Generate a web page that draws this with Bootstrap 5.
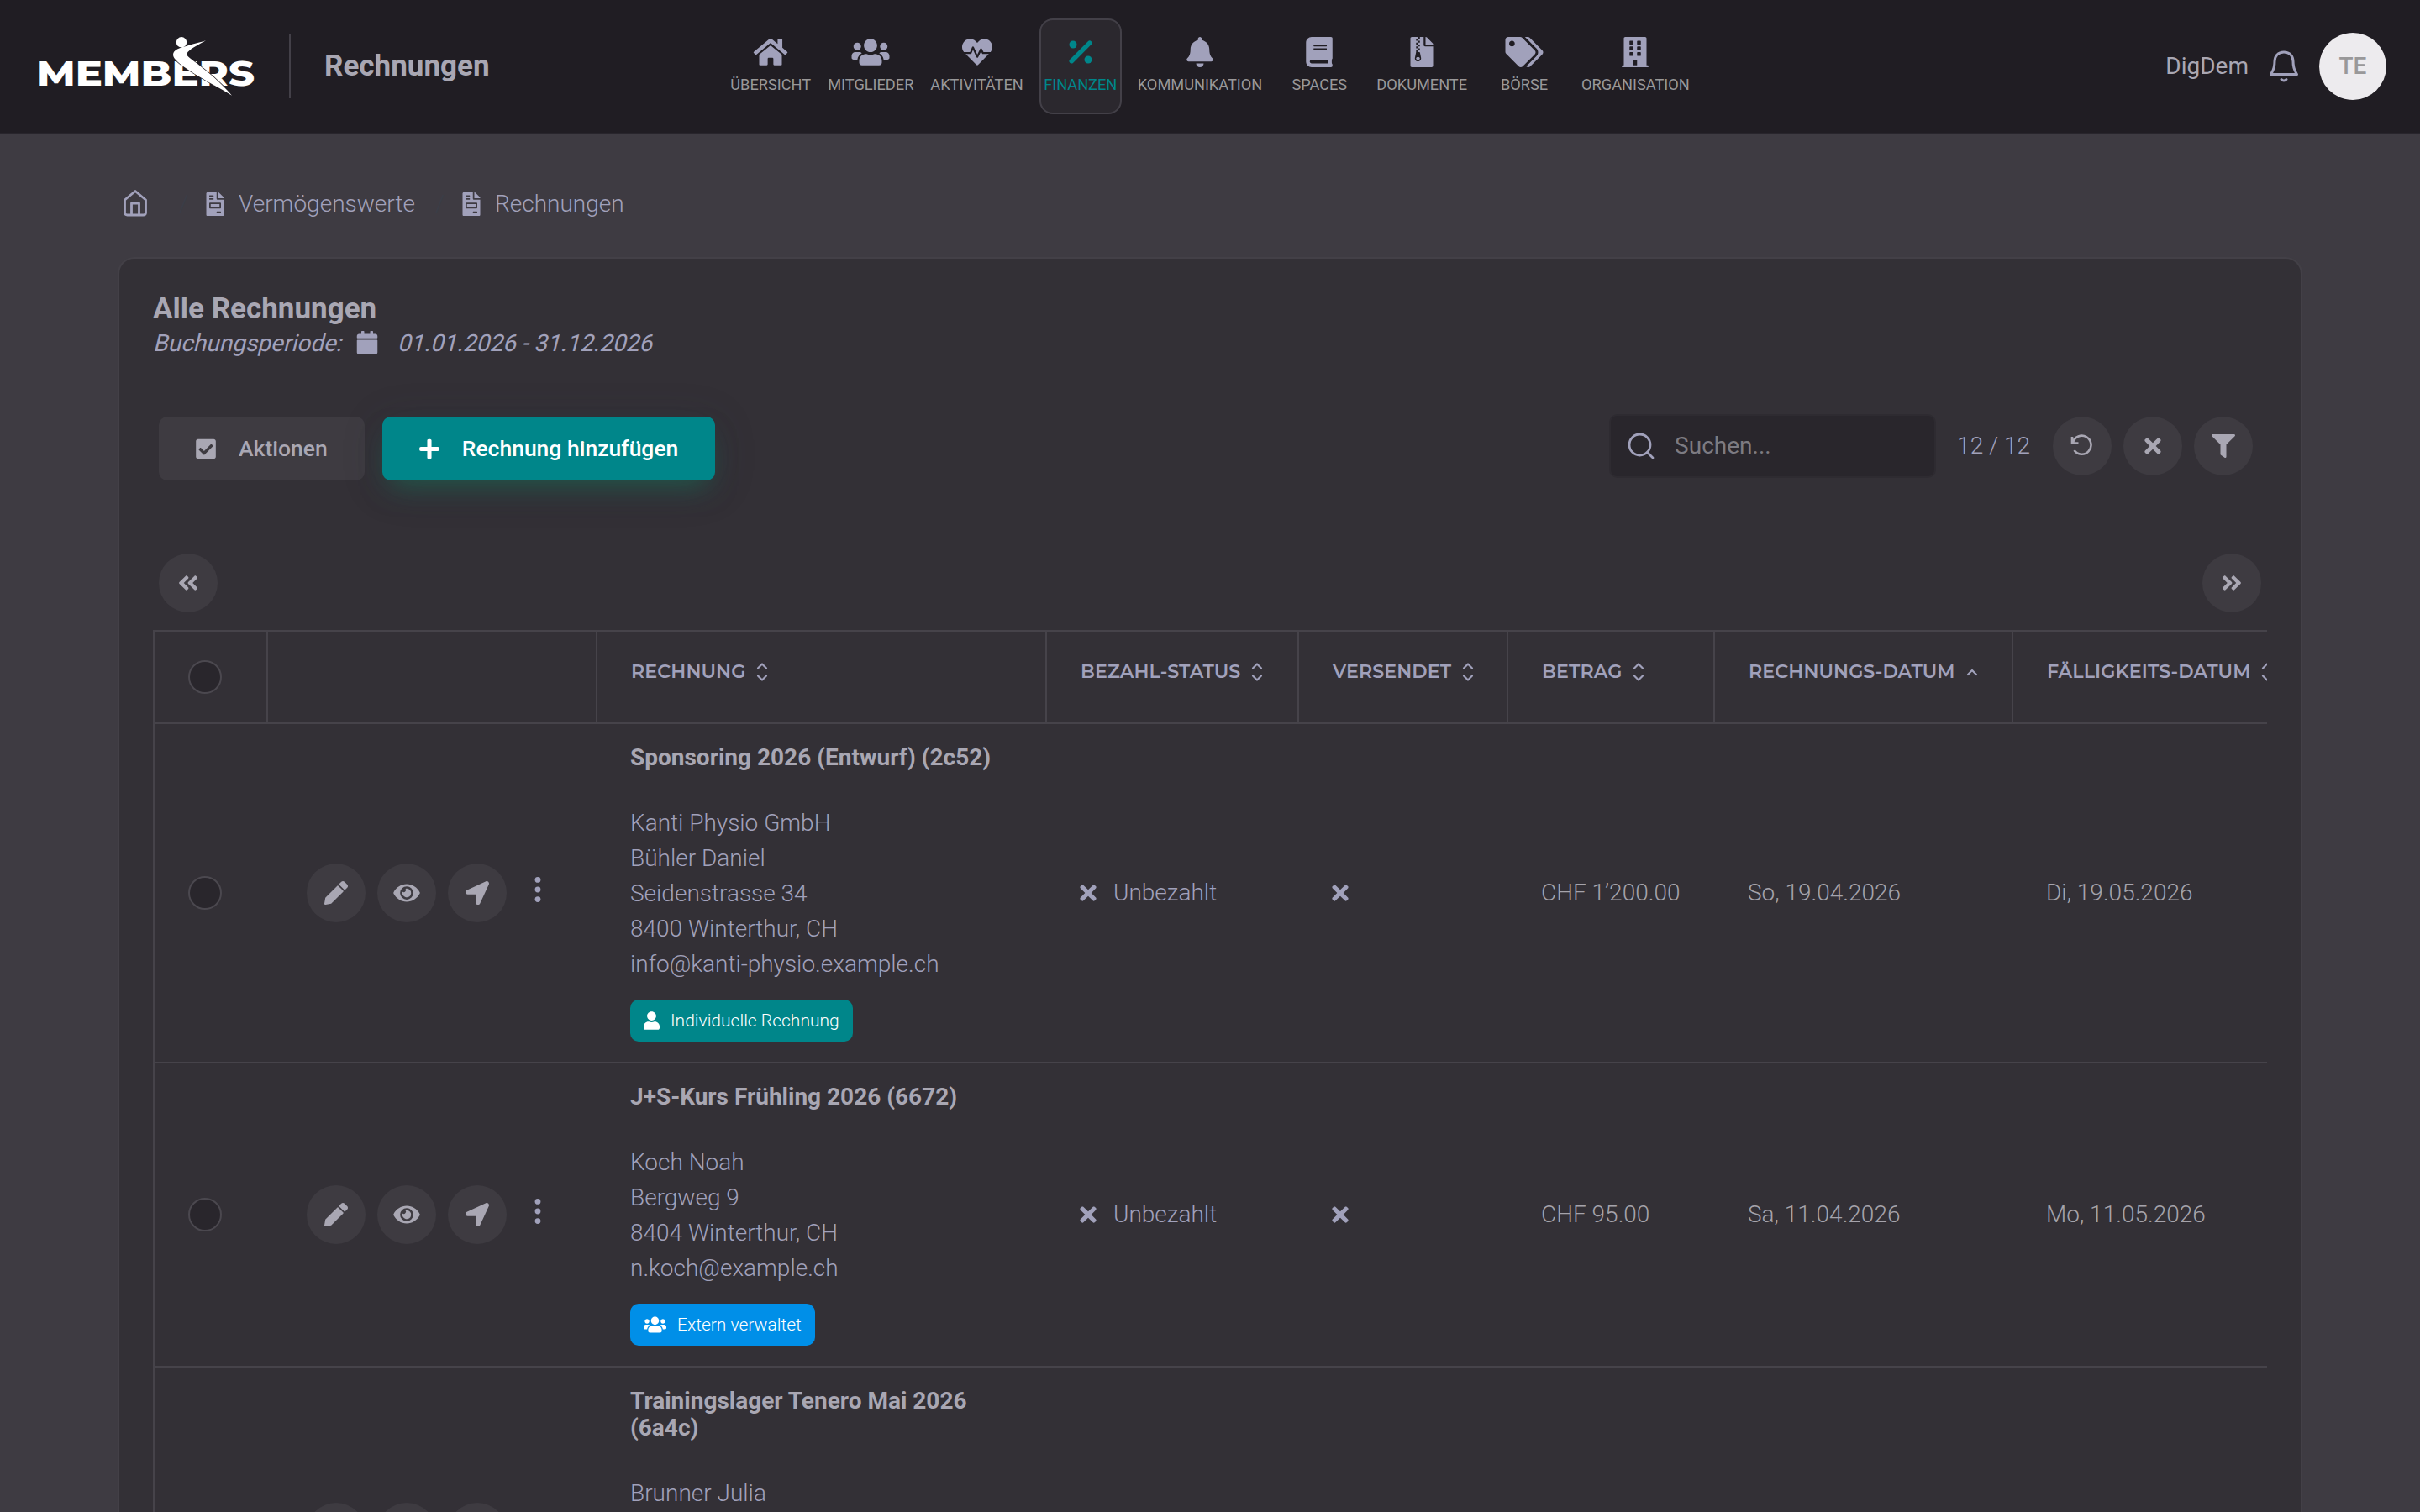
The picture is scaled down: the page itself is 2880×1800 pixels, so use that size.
<!DOCTYPE html>
<html lang="de">
<head>
    <meta charset="UTF-8">
    <title>Rechnungen</title>
    <link href="https://cdn.jsdelivr.net/npm/bootstrap@5.3.0/dist/css/bootstrap.min.css" rel="stylesheet">
    <style>
        body {
            height: 1800px;
            overflow: hidden;
            background: #3e3b42;
            color: #a1a1bb;
            font-family: Roboto, "Liberation Sans", sans-serif;
            font-size: 28px;
            font-weight: 300;
            line-height: 42px;
        }
        .ic { width: 28px; height: 28px; fill: currentColor; flex: none; display: block; }

        /* Kopfzeile */
        .topbar {
            display: grid;
            grid-template-columns: 1fr auto 1fr;
            height: 160px;
            padding: 0 40px;
            background: #201d23;
            border-bottom: 2px solid #28252c;
        }
        .logo { width: 258px; height: 76px; margin-left: 6px; display: block; flex: none; overflow: visible; }
        .page-name {
            height: 76px;
            margin-left: 40px;
            padding-left: 40px;
            border-left: 2px solid #434048;
            color: #a9a7b3;
            font-size: 35px;
            font-weight: 700;
            line-height: 75px;
        }
        .main-nav { gap: 18px; }
        .main-nav a {
            min-width: 98px;
            height: 114px;
            padding: 22px 1px 0;
            border-radius: 16px;
            color: #999899;
            font-size: 18.2px;
            font-weight: 400;
            line-height: 27px;
            text-decoration: none;
        }
        .main-nav a.active { background: #2b282e; border: 2px solid #434048; color: #00868a; padding-top: 20px; }
        .main-nav .ic { width: 46px; height: 36px; margin: 0 auto 7px; color: #a1a1bb; }
        .main-nav .active .ic { color: #00868a; }
        .club { color: #a9a7b3; font-weight: 400; }
        .notify { margin: 0 23px; }
        .avatar { width: 80px; height: 80px; background: #edebee; color: #999899; font-weight: 500; }

        /* Breadcrumb */
        .crumbs { height: 146px; padding: 62px 0 0 146px; }
        .crumbs .home-ic { margin-right: 13px; }
        .crumbs .sep { width: 53px; padding-left: 24px; color: #3a3e48; }
        .crumbs .crumb { height: 42px; gap: 14px; }

        /* Karte */
        .panel {
            width: 2600px;
            margin: 0 auto;
            padding: 39px 40px 0;
            background: #333036;
            border: 2px solid #434047;
            border-bottom: 0;
            border-radius: 20px 20px 0 0;
            height: 1494px;
            overflow: hidden;
        }
        .panel-title { margin: 0; color: #a9a7b3; font-size: 35px; font-weight: 700; line-height: 41px; }
        .period { font-weight: 400; line-height: 42px; }
        .period span { transform: skewX(-14deg); transform-origin: 0 72%; }
        .period .ic { margin: 6px 22px 0 17px; }
        .tools { margin-top: 63px; padding: 0 17px 0 7px; }
        .left-tools { gap: 21px; margin-top: 3px; margin-bottom: -3px; }
        .tool-btn {
            height: 76px;
            padding: 0 44px;
            border: 0;
            border-radius: 10px;
            background: #3e3b41;
            color: #a9a7b3;
            font-size: 26.5px;
            font-weight: 500;
            gap: 27px;
        }
        .tool-btn .ic { width: 24px; height: 27px; }
        .tool-btn.add { background: #00868a; color: #fff; box-shadow: 0 16px 32px -10px rgba(20, 120, 90, .55), 0 8px 50px rgba(40, 60, 80, .2); }
        .search { width: 389px; height: 76px; padding-left: 20px; background: #29262c; border: 2px solid #2e2b31; border-radius: 10px; color: #7d7b82; font-weight: 400; }
        .hits { margin: 0 27px 0 25px; }
        .round-list { gap: 14px; }
        .round-btn { width: 70px; height: 70px; border-radius: 50%; background: #3e3b41; color: #a9a7b3; flex: none; }

        /* Tabelle */
        .pager { margin-top: 90px; padding: 0 7px; height: 70px; }
        .table-clip { width: 2516px; margin-top: 21px; overflow: hidden; }
        .inv-table {
            width: 2563px;
            table-layout: fixed;
            border-collapse: separate;
            border-spacing: 0;
            border-left: 2px solid #46434a;
            margin: 0;
        }
        .inv-table th, .inv-table td { padding: 0 0 0 39px; border: 0 solid #46434a; border-bottom-width: 2px; vertical-align: middle; }
        .inv-table th {
            height: 112px;
            padding-left: 40px;
            border-width: 2px 2px 2px 0;
            font-family: Montserrat, Inter, sans-serif;
            font-size: 22.2px;
            font-weight: 600;
            letter-spacing: .1px;
            white-space: nowrap;
            color: #a1a1bb;
        }
        .inv-table th > div { margin-bottom: 13px; gap: 13px; }
        .inv-table th.pick > div { margin: 0; }
        .inv-table th .ic { width: 14px; height: 24px; fill: none; stroke: currentColor; stroke-width: 2.2; stroke-linejoin: round; stroke-linecap: round; }
        .inv-table td:first-child { padding-left: 40px; }
        .inv-table .bill { padding: 24px 40px 24px 39px; }
        .tick { width: 40px; height: 40px; border: 2px solid #4b484f; border-radius: 50%; background: #29262c; }
        .acts { gap: 14px; padding-left: 7px; }
        .acts .eye-ic { width: 32px; }
        .acts .dots-ic { height: 32px; margin: 0 0 8px 9px; color: #a1a1bb; }
        .bill-name { margin: 0 0 40.5px; color: #a9a7b3; font-size: 28px; font-weight: 700; line-height: 32.4px; }
        .tag { height: 50px; margin-top: 21px; padding: 0 16px; border-radius: 10px; gap: 13px; color: #fff; font-size: 21px; background: #00868a; }
        .tag.extern { background: #008fe8; }
        .tag .ic { width: 19px; height: 22px; }
        .tag.extern .ic { width: 27px; }
        .grey { color: #a5a3ab; }
        .x-ic { width: 20px; height: 28px; }
        .paid { gap: 20px; }
    </style>
</head>
<body>
    <svg width="0" height="0" class="d-none">
        <symbol id="home" viewBox="0 0 576 512"><path d="M280.37 148.26L96 300.11V464a16 16 0 0 0 16 16l112.06-.29a16 16 0 0 0 15.92-16V368a16 16 0 0 1 16-16h64a16 16 0 0 1 16 16v95.64a16 16 0 0 0 16 16.05L464 480a16 16 0 0 0 16-16V300L295.67 148.26a12.19 12.19 0 0 0-15.3 0zM571.6 251.47L488 182.56V44.05a12 12 0 0 0-12-12h-56a12 12 0 0 0-12 12v72.61L318.47 43a48 48 0 0 0-61 0L4.34 251.47a12 12 0 0 0-1.6 16.9l25.5 31A12 12 0 0 0 45.15 301l235.22-193.74a12.19 12.19 0 0 1 15.3 0L530.9 301a12 12 0 0 0 16.9-1.6l25.5-31a12 12 0 0 0-1.7-16.93z"/></symbol>
        <symbol id="users" viewBox="0 0 640 512"><path d="M96 224c35.3 0 64-28.7 64-64s-28.7-64-64-64-64 28.7-64 64 28.7 64 64 64zm448 0c35.3 0 64-28.7 64-64s-28.7-64-64-64-64 28.7-64 64 28.7 64 64 64zm32 32h-64c-17.6 0-33.5 7.1-45.1 18.6 40.3 22.1 68.9 62 75.1 109.4h66c17.7 0 32-14.3 32-32v-32c0-35.3-28.7-64-64-64zm-256 0c61.9 0 112-50.1 112-112S381.9 32 320 32 208 82.1 208 144s50.1 112 112 112zm76.8 32h-8.3c-20.8 10-43.9 16-68.5 16s-47.6-6-68.5-16h-8.3C179.6 288 128 339.6 128 403.2V432c0 26.5 21.5 48 48 48h288c26.5 0 48-21.5 48-48v-28.8c0-63.6-51.6-115.2-115.2-115.2zm-223.7-13.4C161.5 263.1 145.6 256 128 256H64c-35.3 0-64 28.7-64 64v32c0 17.7 14.3 32 32 32h65.9c6.3-47.4 34.9-87.3 75.2-109.4z"/></symbol>
        <symbol id="heart" viewBox="0 0 512 512"><path d="M320.2 243.8l-49.7 99.4c-6 12.1-23.4 11.7-28.9-.6l-56.9-126.3-30 71.7H60.6l182.5 186.5c7.1 7.3 18.6 7.3 25.7 0L451.4 288H342.3l-22.1-44.2zM473.7 73.9l-2.4-2.5c-51.5-52.6-135.8-52.6-187.4 0L256 100l-27.9-28.5c-51.5-52.7-135.9-52.7-187.4 0l-2.4 2.4C-10.4 123.7-12.5 203 31 256h102.4l35.9-86.2c5.4-12.9 23.6-13.1 29.4-.4l58.2 129.3 49-97.9c5.9-11.8 22.7-11.8 28.6 0l27.6 55.2H481c43.5-53 41.4-132.3-7.3-182.1z"/></symbol>
        <symbol id="percent" viewBox="0 0 384 512"><circle cx="64" cy="128" r="64"/><circle cx="320" cy="384" r="64"/><path d="M352 96L46 402" transform="translate(-7 6)" fill="none" stroke="currentColor" stroke-width="78" stroke-linecap="round"/></symbol>
        <symbol id="bell" viewBox="0 0 448 512"><path d="M224 512c35.32 0 63.97-28.65 63.97-64H160.03c0 35.35 28.65 64 63.97 64zm215.39-149.71c-19.32-20.76-55.47-51.99-55.47-154.29 0-77.7-54.48-139.9-127.94-155.16V32c0-17.67-14.32-32-31.98-32s-31.98 14.33-31.98 32v20.84C118.56 68.1 64.08 130.3 64.08 208c0 102.3-36.15 133.53-55.47 154.29-6 6.45-8.66 14.16-8.61 21.71.11 16.4 12.98 32 32.1 32h383.8c19.12 0 32-15.6 32.1-32 .05-7.55-2.61-15.27-8.61-21.71z"/></symbol>
        <symbol id="book" viewBox="0 0 448 512"><path d="M448 360V24c0-13.3-10.7-24-24-24H96C43 0 0 43 0 96v320c0 53 43 96 96 96h328c13.3 0 24-10.7 24-24v-16c0-7.5-3.5-14.3-8.9-18.7-4.2-15.4-4.2-59.3 0-74.7 5.4-4.3 8.9-11.1 8.9-18.6zM128 134c0-3.3 2.7-6 6-6h212c3.3 0 6 2.7 6 6v20c0 3.3-2.7 6-6 6H134c-3.3 0-6-2.7-6-6v-20zm0 64c0-3.3 2.7-6 6-6h212c3.3 0 6 2.7 6 6v20c0 3.3-2.7 6-6 6H134c-3.3 0-6-2.7-6-6v-20zm253.4 250H96c-17.7 0-32-14.3-32-32 0-17.6 14.4-32 32-32h285.4c-1.9 17.1-1.9 46.9 0 64z"/></symbol>
        <symbol id="archive" viewBox="0 0 384 512"><path d="M377 105L279.1 7c-4.5-4.5-10.6-7-17-7H256v128h128v-6.1c0-6.3-2.5-12.4-7-16.9zM128.4 336c-17.9 0-32.4 12.1-32.4 27 0 15 14.6 27 32.5 27s32.4-12.1 32.4-27-14.6-27-32.5-27zM224 136V0h-63.6v32h-32V0H24C10.7 0 0 10.7 0 24v464c0 13.3 10.7 24 24 24h336c13.3 0 24-10.7 24-24V160H248c-13.2 0-24-10.8-24-24zM95.9 32h32v32h-32zm32.3 384c-33.2 0-58-30.4-51.4-62.9L96.4 256v-32h32v-32h-32v-32h32v-32h-32V96h32V64h32v32h-32v32h32v32h-32v32h32v32h-32v32h22.1c5.7 0 10.7 4.1 11.8 9.7l17.3 87.7c6.4 32.4-18.4 62.6-51.4 62.6z"/></symbol>
        <symbol id="tags" viewBox="0 0 640 512"><path d="M497.941 225.941L286.059 14.059A48 48 0 0 0 252.118 0H48C21.49 0 0 21.49 0 48v204.118a48 48 0 0 0 14.059 33.941l211.882 211.882c18.744 18.745 49.136 18.746 67.882 0l204.118-204.118c18.745-18.745 18.745-49.137 0-67.882zM112 160c-26.51 0-48-21.49-48-48s21.49-48 48-48 48 21.49 48 48-21.49 48-48 48zm513.941 133.823L421.823 497.941c-18.745 18.745-49.137 18.745-67.882 0l-.36-.36L527.64 323.522c16.999-16.999 26.362-39.6 26.362-63.64s-9.362-46.641-26.362-63.64L331.397 0h48.721a48 48 0 0 1 33.941 14.059l211.882 211.882c18.745 18.745 18.745 49.137 0 67.882z"/></symbol>
        <symbol id="building" viewBox="0 0 448 512"><path fill-rule="evenodd" d="M436 480h-20V24c0-13.255-10.745-24-24-24H56C42.745 0 32 10.745 32 24v456H12c-6.627 0-12 5.373-12 12v20h448v-20c0-6.627-5.373-12-12-12zM140 64h40a12 12 0 0 1 12 12v40a12 12 0 0 1-12 12h-40a12 12 0 0 1-12-12V76a12 12 0 0 1 12-12zM268 64h40a12 12 0 0 1 12 12v40a12 12 0 0 1-12 12h-40a12 12 0 0 1-12-12V76a12 12 0 0 1 12-12zM140 160h40a12 12 0 0 1 12 12v40a12 12 0 0 1-12 12h-40a12 12 0 0 1-12-12v-40a12 12 0 0 1 12-12zM268 160h40a12 12 0 0 1 12 12v40a12 12 0 0 1-12 12h-40a12 12 0 0 1-12-12v-40a12 12 0 0 1 12-12zM140 256h40a12 12 0 0 1 12 12v40a12 12 0 0 1-12 12h-40a12 12 0 0 1-12-12v-40a12 12 0 0 1 12-12zM268 256h40a12 12 0 0 1 12 12v40a12 12 0 0 1-12 12h-40a12 12 0 0 1-12-12v-40a12 12 0 0 1 12-12zM204 384h40a12 12 0 0 1 12 12v84h-64v-84a12 12 0 0 1 12-12z"/></symbol>
        <symbol id="invoice" viewBox="0 0 384 512"><path d="M288 256H96v64h192v-64zm89-151L279.1 7c-4.5-4.5-10.6-7-17-7H256v128h128v-6.1c0-6.3-2.5-12.4-7-16.9zm-153 31V0H24C10.7 0 0 10.7 0 24v464c0 13.3 10.7 24 24 24h336c13.3 0 24-10.7 24-24V160H248c-13.2 0-24-10.8-24-24zM64 72c0-4.42 3.58-8 8-8h80c4.42 0 8 3.58 8 8v16c0 4.42-3.58 8-8 8H72c-4.42 0-8-3.58-8-8V72zm0 64c0-4.42 3.58-8 8-8h80c4.42 0 8 3.58 8 8v16c0 4.42-3.58 8-8 8H72c-4.42 0-8-3.58-8-8v-16zm256 304c0 4.42-3.58 8-8 8h-80c-4.42 0-8-3.58-8-8v-16c0-4.42 3.58-8 8-8h80c4.42 0 8 3.58 8 8v16zm0-200v96c0 8.84-7.16 16-16 16H80c-8.84 0-16-7.16-16-16v-96c0-8.84 7.16-16 16-16h224c8.84 0 16 7.16 16 16z"/></symbol>
        <symbol id="calendar" viewBox="0 0 448 512"><path d="M12 192h424c6.6 0 12 5.4 12 12v260c0 26.5-21.5 48-48 48H48c-26.5 0-48-21.5-48-48V204c0-6.6 5.4-12 12-12zm436-44v-36c0-26.5-21.5-48-48-48h-48V12c0-6.6-5.4-12-12-12h-40c-6.6 0-12 5.4-12 12v52H160V12c0-6.6-5.4-12-12-12h-40c-6.6 0-12 5.4-12 12v52H48C21.5 64 0 85.5 0 112v36c0 6.6 5.4 12 12 12h424c6.6 0 12-5.4 12-12z"/></symbol>
        <symbol id="check" viewBox="0 0 448 512"><path d="M400 480H48c-26.51 0-48-21.49-48-48V80c0-26.51 21.49-48 48-48h352c26.51 0 48 21.49 48 48v352c0 26.51-21.49 48-48 48zm-204.686-98.059l184-184c6.248-6.248 6.248-16.379 0-22.627l-22.627-22.627c-6.248-6.248-16.379-6.249-22.628 0L184 302.745l-70.059-70.059c-6.248-6.248-16.379-6.248-22.628 0l-22.627 22.627c-6.248 6.248-6.248 16.379 0 22.627l104 104c6.249 6.249 16.379 6.249 22.628.001z"/></symbol>
        <symbol id="plus" viewBox="0 0 448 512"><path d="M416 208H272V64c0-17.67-14.33-32-32-32h-32c-17.67 0-32 14.33-32 32v144H32c-17.67 0-32 14.33-32 32v32c0 17.67 14.33 32 32 32h144v144c0 17.67 14.33 32 32 32h32c17.67 0 32-14.33 32-32V304h144c17.67 0 32-14.33 32-32v-32c0-17.67-14.33-32-32-32z"/></symbol>
        <symbol id="times" viewBox="0 0 352 512"><path d="M242.72 256l100.07-100.07c12.28-12.28 12.28-32.19 0-44.48l-22.24-22.24c-12.28-12.28-32.19-12.28-44.48 0L176 189.28 75.93 89.21c-12.28-12.28-32.19-12.28-44.48 0L9.21 111.45c-12.28 12.28-12.28 32.19 0 44.48L109.28 256 9.21 356.07c-12.28 12.28-12.28 32.19 0 44.48l22.24 22.24c12.28 12.28 32.2 12.28 44.48 0L176 322.72l100.07 100.07c12.28 12.28 32.2 12.28 44.48 0l22.24-22.24c12.28-12.28 12.28-32.19 0-44.48L242.72 256z"/></symbol>
        <symbol id="filter" viewBox="0 0 512 512"><path d="M487.976 0H24.028C2.71 0-8.047 25.866 7.058 40.971L192 225.941V432c0 7.831 3.821 15.17 10.237 19.662l80 55.98C298.02 518.69 320 507.493 320 487.98V225.941l184.947-184.97C520.021 25.896 509.338 0 487.976 0z"/></symbol>
        <symbol id="dbl" viewBox="0 0 448 512"><path d="M223.7 239l136-136c9.4-9.4 24.6-9.4 33.9 0l22.6 22.6c9.4 9.4 9.4 24.6 0 33.9L319.9 256l96.4 96.4c9.4 9.4 9.4 24.6 0 33.9L393.7 409c-9.4 9.4-24.6 9.4-33.9 0l-136-136c-9.5-9.4-9.5-24.6-.1-34zm-192 34l136 136c9.4 9.4 24.6 9.4 33.9 0l22.6-22.6c9.4-9.4 9.4-24.6 0-33.9L127.9 256l96.4-96.4c9.4-9.4 9.4-24.6 0-33.9L201.7 103c-9.4-9.4-24.6-9.4-33.9 0l-136 136c-9.5 9.4-9.5 24.6-.1 34z"/></symbol>
        <symbol id="pen" viewBox="0 0 512 512"><path d="M497.9 142.1l-46.1 46.1c-4.7 4.7-12.3 4.7-17 0l-111-111c-4.7-4.7-4.7-12.3 0-17l46.1-46.1c18.7-18.7 49.1-18.7 67.9 0l60.1 60.1c18.8 18.7 18.8 49.1 0 67.9zM284.2 99.8L21.6 362.4.4 483.9c-2.9 16.4 11.4 30.6 27.8 27.8l121.5-21.3 262.6-262.6c4.7-4.7 4.7-12.3 0-17l-111-111c-4.8-4.7-12.4-4.7-17.1 0z"/></symbol>
        <symbol id="eye" viewBox="0 0 576 512"><path d="M572.52 241.4C518.29 135.59 410.93 64 288 64S57.68 135.64 3.48 241.41a32.35 32.35 0 0 0 0 29.19C57.71 376.41 165.07 448 288 448s230.32-71.64 284.52-177.41a32.35 32.35 0 0 0 0-29.19zM288 400a144 144 0 1 1 144-144 143.93 143.93 0 0 1-144 144zm0-240a95.31 95.31 0 0 0-25.31 3.79 47.85 47.85 0 0 1-66.9 66.9A95.78 95.78 0 1 0 288 160z"/></symbol>
        <symbol id="send" viewBox="0 0 512 512"><path d="M444.52 3.52L28.74 195.42c-47.97 22.39-31.98 92.75 19.19 92.75h175.91v175.91c0 51.17 70.36 67.17 92.75 19.19l191.9-415.78c15.99-38.38-25.59-79.97-63.97-63.96z"/></symbol>
        <symbol id="user" viewBox="0 0 448 512"><path d="M224 256c70.7 0 128-57.3 128-128S294.7 0 224 0 96 57.3 96 128s57.3 128 128 128zm89.6 32h-16.7c-22.2 10.2-46.9 16-72.9 16s-50.6-5.8-72.9-16h-16.7C60.2 288 0 348.2 0 422.4V464c0 26.5 21.5 48 48 48h352c26.5 0 48-21.5 48-48v-41.6c0-74.2-60.2-134.4-134.4-134.4z"/></symbol>
        <symbol id="dots" viewBox="0 0 8 32"><circle cx="4" cy="4.4" r="3.4"/><circle cx="4" cy="16" r="3.4"/><circle cx="4" cy="27.6" r="3.4"/></symbol>
        <symbol id="sort" viewBox="0 0 14 24"><path d="M2 7.5L7 2.5L12 7.5M2 16.5L7 21.5L12 16.5"/></symbol>
        <symbol id="asc" viewBox="0 0 14 24"><path d="M2 15L7 10L12 15"/></symbol>
    </svg>

    <header class="topbar">
        <div class="d-flex align-items-center">
            <svg class="logo" viewBox="0 0 258 76">
                <text x="-2" y="60.5" textLength="259" lengthAdjust="spacingAndGlyphs" font-family="Montserrat, Inter, sans-serif" font-weight="800" font-size="42" fill="#fff">MEMBERS</text>
                <path d="M199 7.300C186 11 172 14.500 165 17.500C159 20.500 159 25 162 29C166 34 172 38 178 42C196 54 214 63 230 72.700C219 60 207 49 194 39C187 33 180 29 176.700 25C175 21 181 17 199 7.300Z" fill="#fff" stroke="#201d23" stroke-width="1.500" paint-order="stroke"/>
                <circle cx="170" cy="9.300" r="6.200" fill="#fff"/>
            </svg>
            <div class="page-name">Rechnungen</div>
        </div>
        <nav class="main-nav d-flex align-items-center text-center">
            <a href="#"><svg class="ic"><use href="#home"/></svg>ÜBERSICHT</a>
            <a href="#"><svg class="ic"><use href="#users"/></svg>MITGLIEDER</a>
            <a href="#"><svg class="ic"><use href="#heart"/></svg>AKTIVITÄTEN</a>
            <a href="#" class="active"><svg class="ic"><use href="#percent"/></svg>FINANZEN</a>
            <a href="#"><svg class="ic"><use href="#bell"/></svg>KOMMUNIKATION</a>
            <a href="#"><svg class="ic"><use href="#book"/></svg>SPACES</a>
            <a href="#"><svg class="ic"><use href="#archive"/></svg>DOKUMENTE</a>
            <a href="#"><svg class="ic"><use href="#tags"/></svg>BÖRSE</a>
            <a href="#"><svg class="ic"><use href="#building"/></svg>ORGANISATION</a>
        </nav>
        <div class="d-flex align-items-center justify-content-end">
            <span class="club">DigDem</span>
            <svg class="notify" width="38" height="40" viewBox="0 0 38 40" fill="none" stroke="#a1a1bb" stroke-width="3" stroke-linejoin="round" stroke-linecap="round"><path d="M19 3C12 3 8 8 8 14C8 24 5 26 3.500 29.500H34.500C33 26 30 24 30 14C30 8 26 3 19 3ZM16 35.500Q19 38.500 22 35.500"/></svg>
            <div class="avatar rounded-circle d-flex align-items-center justify-content-center">TE</div>
        </div>
    </header>

    <div class="crumbs d-flex">
        <svg class="home-ic" width="30" height="42" viewBox="0 0 30 42" fill="none" stroke="#a1a1bb" stroke-width="2.800" stroke-linejoin="round"><path d="M2.500 16L15 5.500L27.500 16V31Q27.500 34 24.500 34H5.500Q2.500 34 2.500 31ZM10.500 34V20H19.500V34"/></svg>
        <span class="sep">/</span>
        <div class="crumb d-flex align-items-center"><svg class="ic"><use href="#invoice"/></svg><span>Vermögenswerte</span></div>
        <span class="sep">/</span>
        <div class="crumb d-flex align-items-center"><svg class="ic"><use href="#invoice"/></svg><span>Rechnungen</span></div>
    </div>

    <main class="panel">
        <h1 class="panel-title">Alle Rechnungen</h1>
        <div class="period d-flex">
            <span>Buchungsperiode:</span>
            <svg class="ic"><use href="#calendar"/></svg>
            <span>01.01.2026 - 31.12.2026</span>
        </div>

        <div class="tools d-flex align-items-center">
            <div class="left-tools d-flex">
                <button class="tool-btn d-flex align-items-center"><svg class="ic"><use href="#check"/></svg>Aktionen</button>
                <button class="tool-btn add d-flex align-items-center"><svg class="ic"><use href="#plus"/></svg>Rechnung hinzufügen</button>
            </div>
            <div class="search d-flex align-items-center ms-auto">
                <svg width="32" height="32" viewBox="0 0 32 32" fill="none" stroke="#a1a1bb" stroke-width="2.800" stroke-linecap="round"><circle cx="14.500" cy="14.500" r="12.500"/><path d="M24 24L30 30"/></svg>
                <span class="ms-4">Suchen...</span>
            </div>
            <span class="hits">12 / 12</span>
            <div class="round-list d-flex">
                <div class="round-btn d-flex align-items-center justify-content-center"><svg width="28" height="28" viewBox="0 0 28 28" fill="none" stroke="#a9a7b3" stroke-width="2.600"><path d="M2 3V10.500H9.500M3 9.500A11 11 0 1 1 4.500 19"/></svg></div>
                <div class="round-btn d-flex align-items-center justify-content-center"><svg class="ic x-ic"><use href="#times"/></svg></div>
                <div class="round-btn d-flex align-items-center justify-content-center"><svg class="ic"><use href="#filter"/></svg></div>
            </div>
        </div>

        <div class="pager d-flex justify-content-between">
            <div class="round-btn d-flex align-items-center justify-content-center"><svg class="ic"><use href="#dbl"/></svg></div>
            <div class="round-btn d-flex align-items-center justify-content-center"><svg class="ic"><use href="#dbl" transform="rotate(180 14 14)"/></svg></div>
        </div>

        <div class="table-clip">
            <table class="inv-table">
                <colgroup>
                    <col width="135"><col width="392"><col width="535"><col width="300"><col width="249"><col width="246"><col width="355"><col width="350">
                </colgroup>
                <thead>
                    <tr>
                        <th class="pick"><div class="tick"></div></th>
                        <th></th>
                        <th><div class="d-flex align-items-center">RECHNUNG<svg class="ic"><use href="#sort"/></svg></div></th>
                        <th><div class="d-flex align-items-center">BEZAHL-STATUS<svg class="ic"><use href="#sort"/></svg></div></th>
                        <th><div class="d-flex align-items-center">VERSENDET<svg class="ic"><use href="#sort"/></svg></div></th>
                        <th><div class="d-flex align-items-center">BETRAG<svg class="ic"><use href="#sort"/></svg></div></th>
                        <th><div class="d-flex align-items-center">RECHNUNGS-DATUM<svg class="ic"><use href="#asc"/></svg></div></th>
                        <th><div class="d-flex align-items-center">FÄLLIGKEITS-DATUM<svg class="ic"><use href="#sort"/></svg></div></th>
                    </tr>
                </thead>
                <tbody>
                    <tr>
                        <td><div class="tick"></div></td>
                        <td>
                            <div class="acts d-flex align-items-center">
                                <div class="round-btn d-flex align-items-center justify-content-center"><svg class="ic"><use href="#pen"/></svg></div>
                                <div class="round-btn d-flex align-items-center justify-content-center"><svg class="ic eye-ic"><use href="#eye"/></svg></div>
                                <div class="round-btn d-flex align-items-center justify-content-center"><svg class="ic"><use href="#send"/></svg></div>
                                <svg class="ic dots-ic"><use href="#dots"/></svg>
                            </div>
                        </td>
                        <td class="bill">
                            <h2 class="bill-name">Sponsoring 2026 (Entwurf) (2c52)</h2>
                            <div>Kanti Physio GmbH<br>Bühler Daniel<br>Seidenstrasse 34<br>8400 Winterthur, CH<br>info@kanti-physio.example.ch</div>
                            <div class="d-flex"><span class="tag d-flex align-items-center"><svg class="ic"><use href="#user"/></svg>Individuelle Rechnung</span></div>
                        </td>
                        <td><div class="paid d-flex align-items-center"><svg class="ic x-ic"><use href="#times"/></svg>Unbezahlt</div></td>
                        <td><svg class="ic x-ic"><use href="#times"/></svg></td>
                        <td class="grey">CHF 1’200.00</td>
                        <td class="grey">So, 19.04.2026</td>
                        <td class="grey">Di, 19.05.2026</td>
                    </tr>
                    <tr>
                        <td><div class="tick"></div></td>
                        <td>
                            <div class="acts d-flex align-items-center">
                                <div class="round-btn d-flex align-items-center justify-content-center"><svg class="ic"><use href="#pen"/></svg></div>
                                <div class="round-btn d-flex align-items-center justify-content-center"><svg class="ic eye-ic"><use href="#eye"/></svg></div>
                                <div class="round-btn d-flex align-items-center justify-content-center"><svg class="ic"><use href="#send"/></svg></div>
                                <svg class="ic dots-ic"><use href="#dots"/></svg>
                            </div>
                        </td>
                        <td class="bill">
                            <h2 class="bill-name">J+S-Kurs Frühling 2026 (6672)</h2>
                            <div>Koch Noah<br>Bergweg 9<br>8404 Winterthur, CH<br>n.koch@example.ch</div>
                            <div class="d-flex"><span class="tag extern d-flex align-items-center"><svg class="ic"><use href="#users"/></svg>Extern verwaltet</span></div>
                        </td>
                        <td><div class="paid d-flex align-items-center"><svg class="ic x-ic"><use href="#times"/></svg>Unbezahlt</div></td>
                        <td><svg class="ic x-ic"><use href="#times"/></svg></td>
                        <td class="grey">CHF 95.00</td>
                        <td class="grey">Sa, 11.04.2026</td>
                        <td class="grey">Mo, 11.05.2026</td>
                    </tr>
                    <tr>
                        <td><div class="tick"></div></td>
                        <td>
                            <div class="acts d-flex align-items-center">
                                <div class="round-btn d-flex align-items-center justify-content-center"></div>
                                <div class="round-btn d-flex align-items-center justify-content-center"></div>
                                <div class="round-btn d-flex align-items-center justify-content-center"></div>
                            </div>
                        </td>
                        <td class="bill">
                            <h2 class="bill-name">Trainingslager Tenero Mai 2026 (6a4c)</h2>
                            <div>Brunner Julia<br>&nbsp;<br>&nbsp;<br>&nbsp;</div>
                            <div class="d-flex"><span class="tag"></span></div>
                        </td>
                        <td></td>
                        <td></td>
                        <td></td>
                        <td></td>
                        <td></td>
                    </tr>
                </tbody>
            </table>
        </div>
    </main>

    <script src="https://cdn.jsdelivr.net/npm/bootstrap@5.3.0/dist/js/bootstrap.bundle.min.js"></script>
</body>
</html>
